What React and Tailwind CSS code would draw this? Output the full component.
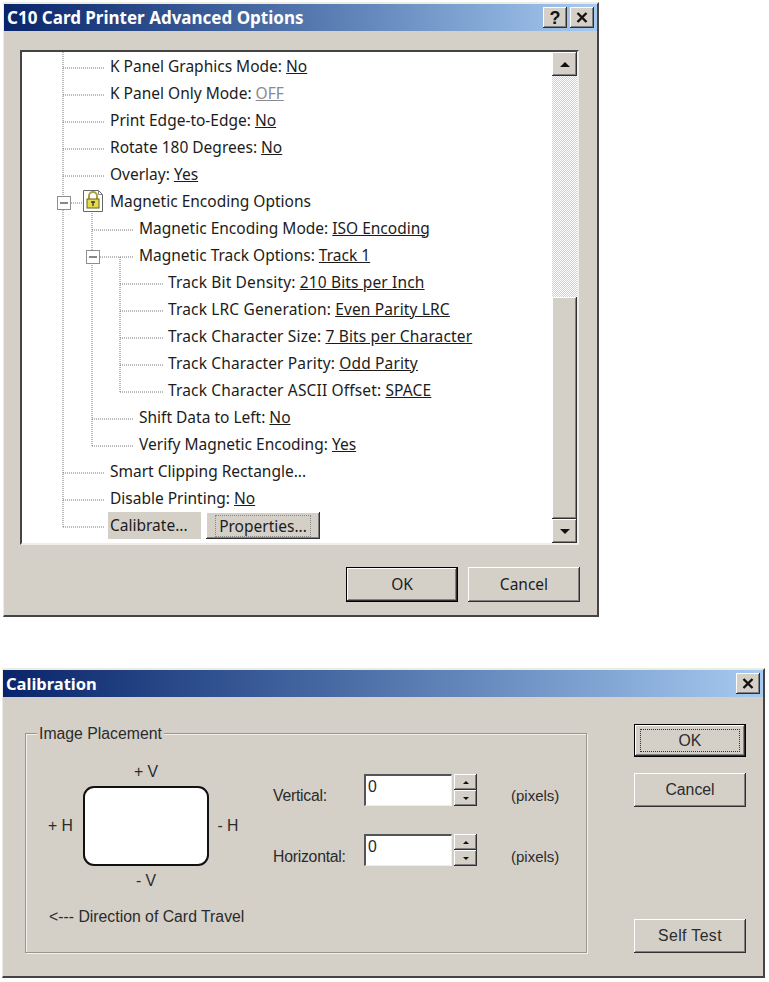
const bevel = "shadow-[inset_-1px_-1px_0_#303030,inset_1px_1px_0_#fff,inset_-2px_-2px_0_#808080]";

const rows = [
  { i: 110, l: "K Panel Graphics Mode:", v: "No" },
  { i: 110, l: "K Panel Only Mode:", v: "OFF", off: true },
  { i: 110, l: "Print Edge-to-Edge:", v: "No" },
  { i: 110, l: "Rotate 180 Degrees:", v: "No" },
  { i: 110, l: "Overlay:", v: "Yes" },
  { i: 110, l: "Magnetic Encoding Options" },
  { i: 139, l: "Magnetic Encoding Mode:", v: "ISO Encoding" },
  { i: 139, l: "Magnetic Track Options:", v: "Track 1" },
  { i: 168, l: "Track Bit Density:", v: "210 Bits per Inch" },
  { i: 168, l: "Track LRC Generation:", v: "Even Parity LRC" },
  { i: 168, l: "Track Character Size:", v: "7 Bits per Character" },
  { i: 168, l: "Track Character Parity:", v: "Odd Parity" },
  { i: 168, l: "Track Character ASCII Offset:", v: "SPACE" },
  { i: 139, l: "Shift Data to Left:", v: "No" },
  { i: 139, l: "Verify Magnetic Encoding:", v: "Yes" },
  { i: 110, l: "Smart Clipping Rectangle..." },
  { i: 110, l: "Disable Printing:", v: "No" },
];

function TreeLines() {
  const y = (n) => 68 + n * 27 - 52;
  const x = (v) => v - 22;
  const H = [[63, 105, [0, 1, 2, 3, 4, 15, 16, 17]], [92, 134, [6, 13, 14]], [120, 163, [8, 9, 10, 11, 12]]];
  return (
    <svg className="absolute left-0 top-0" width="530" height="491" fill="none" stroke="#777" strokeWidth="1" strokeDasharray="1 1">
      <path d={`M${x(63)} 0V${y(17)}`} />
      <path d={`M${x(92)} ${y(5) + 10}V${y(14)}`} />
      <path d={`M${x(120)} ${y(7)}V${y(12)}`} />
      {H.map(([a, b, list]) => list.map((n) => <path key={`${a}-${n}`} d={`M${x(a)} ${y(n)}H${x(b)}`} />))}
      <path d={`M${x(71)} ${y(5)}H${x(82)}`} />
      <path d={`M${x(100)} ${y(7)}H${x(134)}`} />
      <g strokeDasharray="none">
        <rect x={x(57.5)} y={y(5) - 6.5} width="13" height="13" fill="#fff" stroke="#8e8e8e" />
        <path d={`M${x(60)} ${y(5)}H${x(68)}`} stroke="#111" />
        <rect x={x(86.5)} y={y(7) - 6.5} width="13" height="13" fill="#fff" stroke="#8e8e8e" />
        <path d={`M${x(89)} ${y(7)}H${x(97)}`} stroke="#111" />
      </g>
    </svg>
  );
}

function LockIcon() {
  return (
    <svg className="absolute left-[60px] top-[136px]" width="22" height="25" viewBox="0 0 22 25">
      <path d="M1.5 2.5h15l4 4v17h-19z" fill="#fff" stroke="#666" />
      <path d="M16.5 2.5v4h4" fill="none" stroke="#888" />
      <path d="M7 11V8a4 4 0 0 1 8 0v3" fill="none" stroke="#a8a040" strokeWidth="2" />
      <rect x="5" y="11" width="12" height="9" fill="#e6d94a" stroke="#6a6320" />
      <path d="M9 14h4M11 14v4" stroke="#333" strokeWidth="1.3" />
    </svg>
  );
}

function Tri({ up, size = 5 }) {
  return (
    <svg width={size * 2} height={size} viewBox="0 0 10 5">
      <path d={up ? "M5 0l5 5H0z" : "M0 0h10L5 5z"} fill="#111" />
    </svg>
  );
}

function CloseGlyph() {
  return (
    <svg width="12" height="11" viewBox="0 0 12 11">
      <path d="M1.5 1l9 9M10.5 1l-9 9" stroke="#111" strokeWidth="2.4" fill="none" />
    </svg>
  );
}

function TitleBar({ title, cls, children }) {
  return (
    <div className="h-[27px] flex items-center justify-between bg-gradient-to-r from-[#0a246a] to-[#a6caf0] pl-[3px] pr-[3px]">
      <span className={`text-white font-bold pt-px font-['Noto_Sans',sans-serif] ${cls}`}>{title}</span>
      <div className="flex gap-[3px]">{children}</div>
    </div>
  );
}

function CapBtn({ children }) {
  return (
    <div className={`w-[24px] h-[21px] bg-[#d4d0c8] flex items-center justify-center text-[18px] font-bold text-[#111] leading-none font-['Liberation_Sans',sans-serif] ${bevel}`}>
      {children}
    </div>
  );
}

function Btn({ children, cls = "", isDefault, focus }) {
  return (
    <div className={`w-[112px] flex items-center justify-center bg-[#d4d0c8] ${isDefault ? "border border-black" : ""} ${bevel} ${cls}`}>
      {focus ? (
        <span className="w-[100px] h-[23px] border border-dotted border-[#333] flex items-center justify-center">{children}</span>
      ) : children}
    </div>
  );
}

function Spin() {
  return (
    <div className="ml-[2px] w-[23px] h-[32px] flex flex-col">
      <div className={`h-[16px] flex items-center justify-center bg-[#d4d0c8] ${bevel}`}><Tri up size={3} /></div>
      <div className={`h-[16px] flex items-center justify-center bg-[#d4d0c8] ${bevel}`}><Tri size={3} /></div>
    </div>
  );
}

function Field({ label, top }) {
  return (
    <div className="flex items-start">
      <span className={`w-[91px] leading-[20px] tracking-[-0.25px] ${top}`}>{label}</span>
      <div className="w-[88px] h-[32px] bg-white border-t-2 border-l-2 border-t-[#555] border-l-[#555] border-b border-r border-b-[#eee] border-r-[#eee] pl-[2px] leading-[22px]">0</div>
      <Spin />
      <span className={`ml-[34px] leading-[20px] text-[15px] ${top}`}>(pixels)</span>
    </div>
  );
}

export default function App() {
  return (
    <div className="w-[769px] h-[982px] bg-white overflow-hidden">
      {/* Advanced options dialog */}
      <div className="ml-[3px] mt-[2px] w-[596px] h-[615px] bg-[#d4d0c8] border-t-2 border-l border-t-[#ecebe4] border-l-[#ecebe4] border-r-2 border-b-2 border-r-[#444] border-b-[#444] flex flex-col font-['Noto_Sans',sans-serif] text-[15.5px] text-[#1c1c1c]">
        <TitleBar title="C10 Card Printer Advanced Options" cls="text-[17px]">
          <CapBtn>?</CapBtn>
          <CapBtn><CloseGlyph /></CapBtn>
        </TitleBar>
        <div className="ml-[16px] mt-[19px] w-[559px] h-[495px] flex bg-white border-t-2 border-l-2 border-t-[#444] border-l-[#444] border-r-2 border-b-2 border-r-[#eeede8] border-b-[#eeede8]">
          <div className="relative flex-1 pt-px">
            <TreeLines />
            <LockIcon />
            {rows.map((r) => (
              <div key={r.l} className={`h-[27px] flex items-center ${r.i === 168 ? "tracking-[0.15px]" : ""}`} style={{ paddingLeft: r.i - 22 }}>
                <span className="relative whitespace-pre">
                  {r.l}
                  {r.v ? " " : ""}
                  {r.v && <span className={`underline ${r.off ? "text-[#8a8a8a]" : ""}`}>{r.v}</span>}
                </span>
              </div>
            ))}
            <div className="h-[27px] flex items-center pl-[86px] relative">
              <span className="w-[93px] h-[27px] bg-[#d4d0c8] pl-[2px] flex items-center">Calibrate...</span>
              <div className={`ml-[5px] w-[114px] h-[27px] bg-[#d4d0c8] flex items-center justify-center ${bevel}`}>
                <span className="px-[3px] border border-dotted border-[#888] leading-[20px]">Properties...</span>
              </div>
            </div>
          </div>
          <div className="w-[25px] flex flex-col">
            <div className={`h-[24px] flex items-center justify-center bg-[#d4d0c8] ${bevel}`}><Tri up /></div>
            <div className="h-[221px] bg-[repeating-conic-gradient(#d4d0c8_0_25%,#fff_0_50%)] bg-[length:2px_2px]" />
            <div className={`flex-1 bg-[#d4d0c8] ${bevel}`} />
            <div className={`h-[24px] flex items-center justify-center bg-[#d4d0c8] ${bevel}`}><Tri /></div>
          </div>
        </div>
        <div className="mt-[22px] mr-[17px] flex justify-end gap-[10px]">
          <Btn isDefault cls="h-[35px]">OK</Btn>
          <Btn cls="h-[35px]">Cancel</Btn>
        </div>
      </div>

      {/* Calibration dialog */}
      <div className="ml-[2px] mt-[51px] w-[763px] h-[310px] bg-[#d4d0c8] border-t-2 border-l border-t-[#ecebe4] border-l-[#ecebe4] border-r-2 border-b-2 border-r-[#444] border-b-[#444] flex flex-col font-['Liberation_Sans',sans-serif] text-[15.8px] text-[#2b2b2b]">
        <TitleBar title="Calibration" cls="text-[16.5px]">
          <CapBtn><CloseGlyph /></CapBtn>
        </TitleBar>
        <div className="flex pl-[22px] pt-[27px]">
          <div className="relative mt-[9px] w-[562px] h-[220px] border border-[#98958e] shadow-[inset_1px_1px_0_#f2f1ec,1px_1px_0_#f2f1ec] flex items-start">
            <span className="absolute left-[11px] -top-[10px] bg-[#d4d0c8] px-[2px] leading-[20px]">Image Placement</span>
            <div className="ml-[12px] mt-[23px] flex flex-col">
              <div className="grid grid-cols-[45px_126px_38px] grid-rows-[29px_80px_30px] items-center justify-items-center">
                <span className="col-start-2">+ V</span>
                <span className="col-start-1 row-start-2">+ H</span>
                <div className="col-start-2 row-start-2 w-[126px] h-[80px] bg-white border-2 border-[#111] rounded-[11px]" />
                <span className="col-start-3 row-start-2">- H</span>
                <span className="col-start-2 row-start-3">- V</span>
              </div>
              <span className="ml-[11px] mt-[11px] leading-[20px] whitespace-nowrap">&lt;--- Direction of Card Travel</span>
            </div>
            <div className="ml-[26px] mt-[40px] flex flex-col gap-[28px]">
              <Field label="Vertical:" top="mt-[12px]" />
              <Field label="Horizontal:" top="mt-[13px]" />
            </div>
          </div>
          <div className="ml-[47px] w-[112px] h-[229px] flex flex-col">
            <Btn isDefault focus cls="h-[33px]">OK</Btn>
            <Btn cls="h-[34px] mt-[16px]">Cancel</Btn>
            <Btn cls="h-[34px] mt-auto tracking-[0.4px]">Self Test</Btn>
          </div>
        </div>
      </div>
    </div>
  );
}
